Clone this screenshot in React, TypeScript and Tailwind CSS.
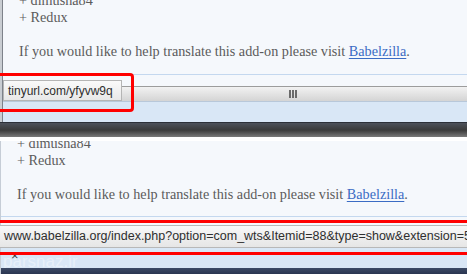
const serif = "font-['Liberation_Serif',serif]";
const ui = "font-['Liberation_Sans',sans-serif]";

const Body = () => (
  <div className={`${serif} text-[14.2px] leading-[17px] text-[#5b5b5b] pl-[16px]`}>
    <p className="m-0">+ dimusha84</p>
    <p className="m-0">+ Redux</p>
    <p className="m-0 mt-[17px]">
      If you would like to help translate this add-on please visit{" "}
      <a className="text-[#3b6cc4] underline underline-offset-2">Babelzilla</a>.
    </p>
  </div>
);

const App = () => {
  return (
    <div className="w-[467px] h-[274px] overflow-hidden bg-[#3b3f46] flex flex-col">
      {/* top window */}
      <div className="relative h-[122px] flex">
        <div className="w-[3px] bg-[#c9cdd2] border-r border-[#7d828a]" />
        <div className="flex-1 flex flex-col">
          <div className="h-[74px] bg-[#f5f8fc] overflow-hidden flex flex-col justify-end pb-[14px]">
            <Body />
          </div>
          <div className="h-[12px] bg-[#f5f8fc] border-t border-[#c4d8ef]" />
          <div className="h-[15px] border-t border-[#9c9c9c] bg-gradient-to-b from-[#f2f2f2] to-[#d4d4d4] flex items-center pl-[286px]">
            <div className="flex gap-[1px] h-[8px]">
              <div className="w-[2px] bg-[#6a6a6a]" />
              <div className="w-[2px] bg-[#6a6a6a]" />
              <div className="w-[2px] bg-[#6a6a6a]" />
            </div>
          </div>
          <div className="flex-1 bg-[#d9e7f6] border-t border-[#b8c8da] relative overflow-hidden">
            <div className="absolute left-[10px] top-[8px] h-[4px] overflow-hidden">
              <span className={`${ui} block text-[13px] leading-none text-[#333]`}>×</span>
            </div>
          </div>
        </div>
        <div className={`${ui} absolute left-[3px] top-[80px] h-[21px] w-[119px] bg-gradient-to-b from-[#fafafa] to-[#e8e8e8] border border-[#b5b5b5] text-[12px] text-[#2e2e2e] flex items-center pl-[4px] whitespace-nowrap`}>
          tinyurl.com/yfyvw9q
        </div>
        <div className="absolute left-[-6px] top-[73px] w-[140px] h-[39px] border-[3px] border-[#ff0000] rounded-[4px]" />
      </div>

      {/* gap between shots */}
      <div className="h-[15px] bg-gradient-to-b from-[#4c515a] via-[#3a3a3a] to-[#7a7a7a] border-t border-[#2c3038]" />
      <div className="h-[4px] bg-white" />

      {/* bottom window */}
      <div className="relative flex-1 flex">
        <div className="w-[4px] bg-[#3e4653] border-r border-[#c6cdd6]" />
        <div className="flex-1 flex flex-col">
          <div className="h-[76px] bg-[#f5f8fc] overflow-hidden flex flex-col justify-end pb-[13px] border-b border-[#c4d8ef]">
            <Body />
          </div>
          <div className="h-[8px] bg-[#f5f8fc]" />
          <div className={`${ui} h-[23px] ml-[-1px] bg-gradient-to-b from-[#f8f8f8] to-[#e6e6e6] border-t border-b border-[#b8b8b8] text-[12.5px] text-[#2e2e2e] flex items-center pl-[4px] whitespace-nowrap overflow-hidden`}>
            www.babelzilla.org/index.php?option=com_wts&amp;Itemid=88&amp;type=show&amp;extension=5
          </div>
          <div className="h-[20px] bg-[#d9e7f6] relative overflow-hidden">
            <span className={`${ui} absolute left-[10px] top-[1px] text-[13px] leading-none text-[#333]`}>×</span>
            <span className={`${ui} absolute left-[2px] top-[5px] text-[17px] leading-none text-white/40`}>parsnaz.ir</span>
          </div>
          <div className="flex-1 bg-gradient-to-b from-[#3c4a66] to-[#2a3550]" />
        </div>
        <div className="absolute left-0 right-0 top-[79px] h-[3px] bg-[#ff0000]" />
        <div className="absolute left-0 right-0 top-[111px] h-[3px] bg-[#ff0000]" />
      </div>
    </div>
  );
};

export default App;
